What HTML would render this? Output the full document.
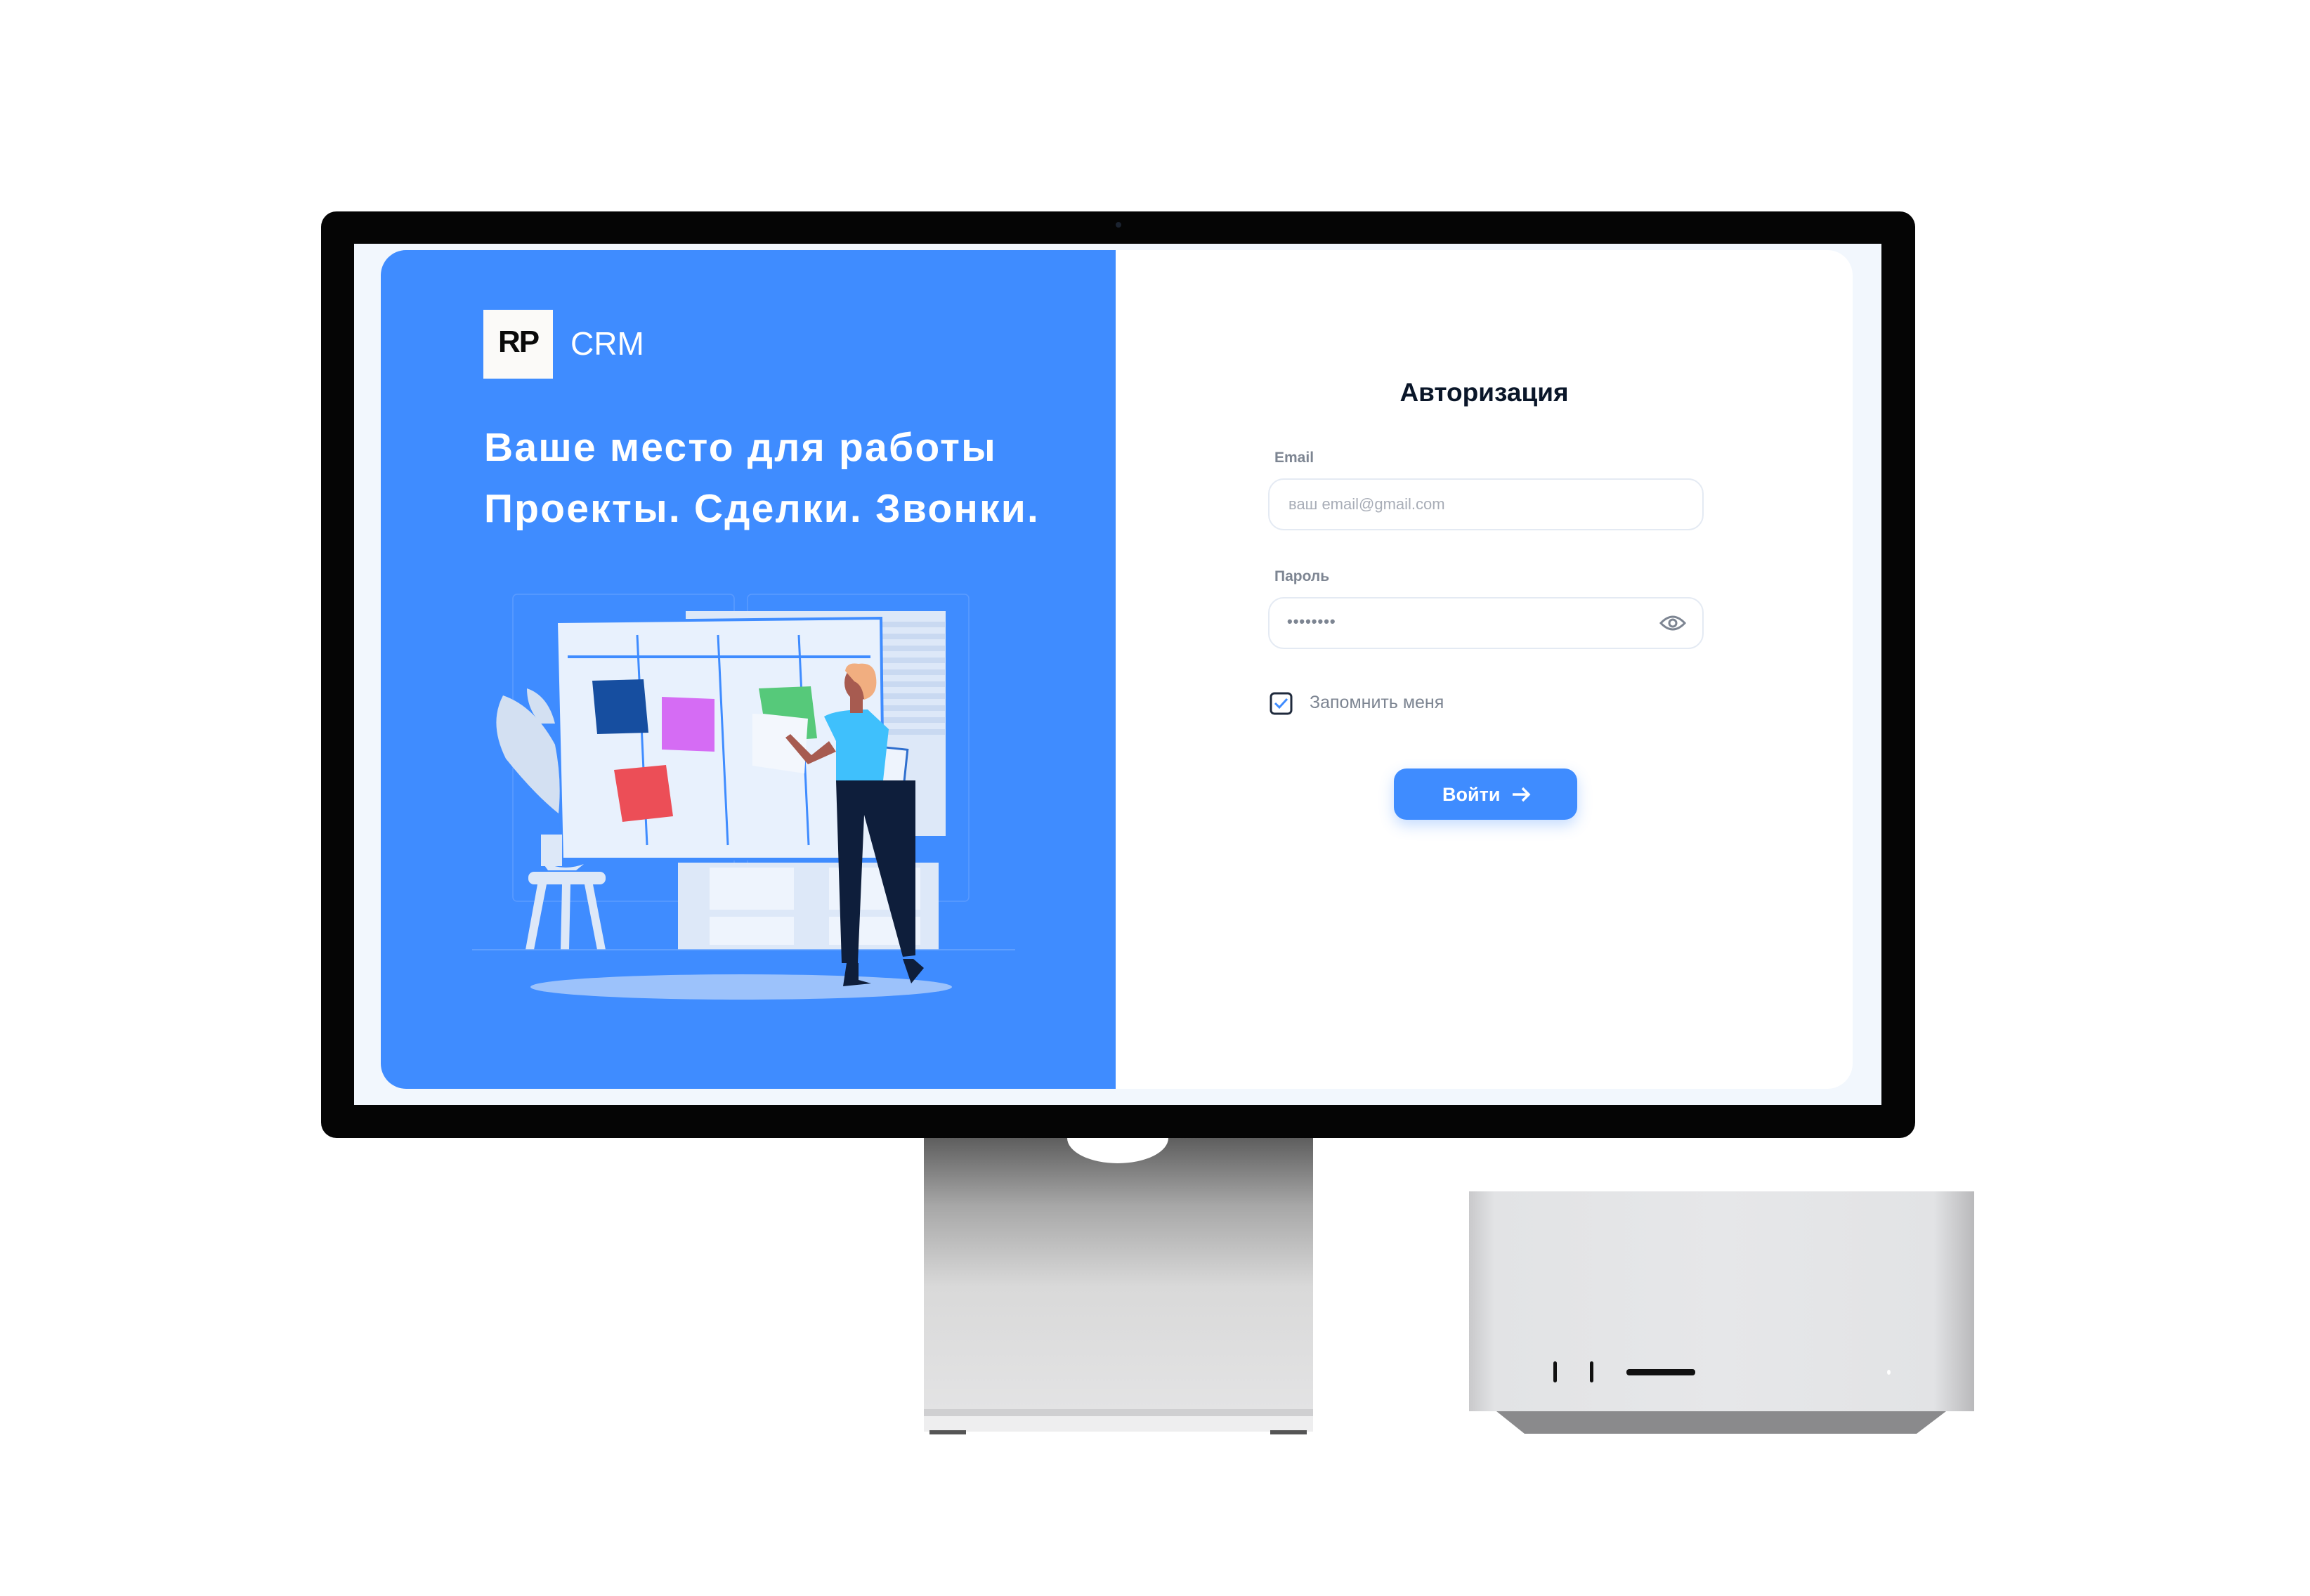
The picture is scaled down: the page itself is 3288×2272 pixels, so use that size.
<!DOCTYPE html>
<html><head><meta charset="utf-8"><style>
*{margin:0;padding:0;box-sizing:border-box}
body{width:3288px;height:2272px;background:#fff;position:relative;overflow:hidden;font-family:"Liberation Sans",sans-serif}
.abs{position:absolute}
#mon{left:457px;top:301px;width:2269px;height:1319px;background:#050505;border-radius:22px}
#scr{left:504px;top:347px;width:2174px;height:1226px;background:#f2f7fd}
#blue{left:542px;top:356px;width:1046px;height:1194px;background:#3f8cff;border-radius:36px 0 0 36px}
#card{left:1588px;top:356px;width:1049px;height:1194px;background:#fff;border-radius:0 36px 36px 0}
.lbl{font-size:21px;font-weight:bold;color:#7d8592}
.inp{left:1805px;width:620px;height:74px;border:2px solid #e4eaf3;border-radius:22px;background:#fff}
</style></head><body>
<div class="abs" id="mon"></div>
<div class="abs" style="left:1588px;top:316px;width:8px;height:8px;border-radius:50%;background:#1b2330"></div>
<div class="abs" id="scr"></div>
<div class="abs" id="blue"></div>
<div class="abs" id="card"></div>

<div class="abs" style="left:688px;top:441px;width:99px;height:98px;background:#fbfaf8"></div>
<div class="abs" style="left:688px;top:462px;width:99px;text-align:center;font-size:44px;font-weight:bold;color:#0a0a0a;letter-spacing:-2px">RP</div>
<div class="abs" style="left:812px;top:462px;font-size:46px;color:#fff">CRM</div>
<div class="abs" style="left:689px;top:594px;font-size:57px;font-weight:bold;color:#fff;line-height:87px;white-space:nowrap;letter-spacing:2.2px">Ваше место для работы<br>Проекты. Сделки. Звонки.</div>

<svg class="abs" style="left:660px;top:830px" width="800" height="620" viewBox="0 0 800 620">
<rect x="70" y="16" width="315" height="437" rx="6" fill="none" stroke="#5b9bff" stroke-width="1.5"/>
<rect x="404" y="16" width="315" height="437" rx="6" fill="none" stroke="#5b9bff" stroke-width="1.5"/>
<rect x="316" y="40" width="370" height="320" fill="#dde8f8"/>
<g fill="#c9d9f1"><rect x="590" y="55" width="95" height="8"/><rect x="590" y="72" width="95" height="8"/><rect x="590" y="89" width="95" height="8"/><rect x="590" y="106" width="95" height="8"/><rect x="590" y="123" width="95" height="8"/><rect x="590" y="140" width="95" height="8"/><rect x="590" y="157" width="95" height="8"/><rect x="590" y="174" width="95" height="8"/><rect x="590" y="191" width="95" height="8"/><rect x="590" y="208" width="95" height="8"/></g>
<rect x="305" y="398" width="371" height="124" fill="#dde8f8"/>
<rect x="350" y="405" width="120" height="60" fill="#eef4fd"/><rect x="350" y="475" width="120" height="40" fill="#eef4fd"/>
<rect x="520" y="405" width="130" height="60" fill="#eef4fd"/><rect x="520" y="475" width="130" height="40" fill="#eef4fd"/>
<path d="M132 55 L594 50 L598 393 L140 393 Z" fill="#e8f1fd" stroke="#3f8cff" stroke-width="4"/>
<line x1="148" y1="105" x2="579" y2="105" stroke="#3f8cff" stroke-width="4"/>
<line x1="247" y1="74" x2="261" y2="373" stroke="#3f8cff" stroke-width="3"/>
<line x1="362" y1="74" x2="376" y2="373" stroke="#3f8cff" stroke-width="3"/>
<line x1="477" y1="74" x2="491" y2="373" stroke="#3f8cff" stroke-width="3"/>
<path d="M183 139 L256 137 L263 213 L190 215 Z" fill="#164ea0"/>
<path d="M282 162 L357 165 L357 240 L282 237 Z" fill="#d56cf4"/>
<path d="M214 266 L288 259 L298 332 L226 340 Z" fill="#ec4e57"/>
<path d="M411 186 L490 190 L485 271 L411 260 Z" fill="#f3f7fd"/>
<path d="M420 150 L494 147 L503 221 L488 222 L490 193 L426 186 Z" fill="#56c97a"/>
<path d="M56 160 Q100 175 130 230 Q140 280 135 328 Q100 300 60 250 Q35 200 56 160 Z" fill="#d3e0f2"/>
<path d="M90 150 Q120 160 130 200 L110 200 Q90 180 90 150Z" fill="#d3e0f2"/>
<rect x="110" y="358" width="30" height="45" fill="#dde8f8"/><path d="M110 395 Q140 412 171 400 L160 409 L120 409Z" fill="#dde8f8"/>
<rect x="92" y="411" width="110" height="18" rx="8" fill="#dde8f8"/>
<path d="M105 429 L118 429 L100 522 L88 522Z M140 429 L152 429 L150 522 L138 522Z M172 429 L184 429 L202 522 L190 522Z" fill="#dde8f8"/>
<line x1="12" y1="522" x2="785" y2="522" stroke="#6aa5ff" stroke-width="1.5"/>
<ellipse cx="395" cy="575" rx="300" ry="18" fill="#9cc2fb"/>
<path d="M590 230 L612 265 L615 315 L600 318 L595 270Z" fill="#a75b50"/>
<rect x="588" y="235" width="40" height="75" fill="#eef4fd" stroke="#2f6fce" stroke-width="3" transform="rotate(6 608 272)"/>
<path d="M530 281 L643 281 L643 530 L625 532 L570 330 L561 541 L538 541Z" fill="#0e1e3b"/>
<path d="M513 190 Q530 180 575 180 L605 208 L597 281 L530 281 L530 225 Z" fill="#3fc0fc"/>
<path d="M520 225 L495 245 L465 215 L458 220 L490 258 L530 240Z" fill="#a75b50"/>
<rect x="550" y="160" width="18" height="25" fill="#a75b50"/>
<ellipse cx="562" cy="142" rx="20" ry="25" fill="#a75b50"/>
<path d="M543 125 Q545 112 562 115 Q585 112 587 135 Q590 160 570 166 Q568 145 556 140 Z" fill="#f1ae80"/>
<path d="M545 541 L562 541 L562 565 L580 570 L540 574 Z" fill="#0e1e3b"/>
<path d="M625 535 L640 535 L655 548 L637 570 Z" fill="#0e1e3b"/>
</svg>

<div class="abs" style="left:1588px;top:538px;width:1049px;text-align:center;font-size:37px;font-weight:bold;color:#0a1629">Авторизация</div>
<div class="abs lbl" style="left:1814px;top:640px">Email</div>
<div class="abs inp" style="top:681px"></div>
<div class="abs" style="left:1834px;top:705px;font-size:22px;color:#a8adb7">ваш email@gmail.com</div>
<div class="abs lbl" style="left:1814px;top:809px">Пароль</div>
<div class="abs inp" style="top:850px"></div>
<div class="abs" style="left:1832px;top:872px;font-size:22px;letter-spacing:1px;color:#7d8592;font-weight:bold">••••••••</div>
<svg class="abs" style="left:2361px;top:872px" width="40" height="30" viewBox="0 0 40 30"><path d="M3 15 Q20 -3 37 15 Q20 33 3 15Z" fill="none" stroke="#7d8592" stroke-width="3"/><circle cx="20" cy="15" r="5" fill="none" stroke="#7d8592" stroke-width="3"/></svg>
<svg class="abs" style="left:1807px;top:985px" width="33" height="33" viewBox="0 0 33 33"><rect x="2" y="2" width="29" height="29" rx="5" fill="#fff" stroke="#1f2a3c" stroke-width="3"/><path d="M8 16 L14 22 L25 10" fill="none" stroke="#3f8cff" stroke-width="3"/></svg>
<div class="abs" style="left:1864px;top:986px;font-size:25px;color:#7d8592">Запомнить меня</div>
<div class="abs" style="left:1984px;top:1094px;width:261px;height:73px;border-radius:18px;background:#3f8cff;box-shadow:0 8px 20px rgba(63,140,255,0.3)"></div>
<div class="abs" style="left:2053px;top:1116px;font-size:27px;font-weight:bold;color:#fff">Войти</div>
<svg class="abs" style="left:2150px;top:1116px" width="30" height="30" viewBox="0 0 30 30"><path d="M3 15 H26 M17 6 L26 15 L17 24" fill="none" stroke="#fff" stroke-width="3.5"/></svg>

<div class="abs" style="left:1315px;top:1620px;width:554px;height:386px;background:linear-gradient(#5e5e5e,#a7a7a7 25%,#d9d9d9 55%,#e3e3e4)"></div>
<div class="abs" style="left:1519px;top:1620px;width:144px;height:36px;background:#fff;border-radius:0 0 72px 72px / 0 0 36px 36px"></div>
<div class="abs" style="left:1315px;top:2006px;width:554px;height:10px;background:#cfcfd1"></div>
<div class="abs" style="left:1315px;top:2016px;width:554px;height:22px;background:#eeeeef"></div>
<div class="abs" style="left:1323px;top:2036px;width:52px;height:6px;background:#555"></div>
<div class="abs" style="left:1808px;top:2036px;width:52px;height:6px;background:#555"></div>

<div class="abs" style="left:2091px;top:1696px;width:719px;height:313px;background:linear-gradient(90deg,#c9c9cb,#e2e3e5 5%,#e6e7e9 50%,#e2e3e5 92%,#b9b9bb)"></div>
<svg class="abs" style="left:2130px;top:2009px" width="640" height="32" viewBox="0 0 640 32"><path d="M0 0 H640 L598 32 H40 Z" fill="#8a8a8c"/></svg>
<div class="abs" style="left:2211px;top:1938px;width:5px;height:30px;background:#111;border-radius:3px"></div>
<div class="abs" style="left:2263px;top:1938px;width:5px;height:30px;background:#111;border-radius:3px"></div>
<div class="abs" style="left:2315px;top:1949px;width:98px;height:9px;background:#111;border-radius:4px"></div>
<div class="abs" style="left:2686px;top:1950px;width:5px;height:7px;background:#fff;border-radius:50%"></div>
</body></html>
